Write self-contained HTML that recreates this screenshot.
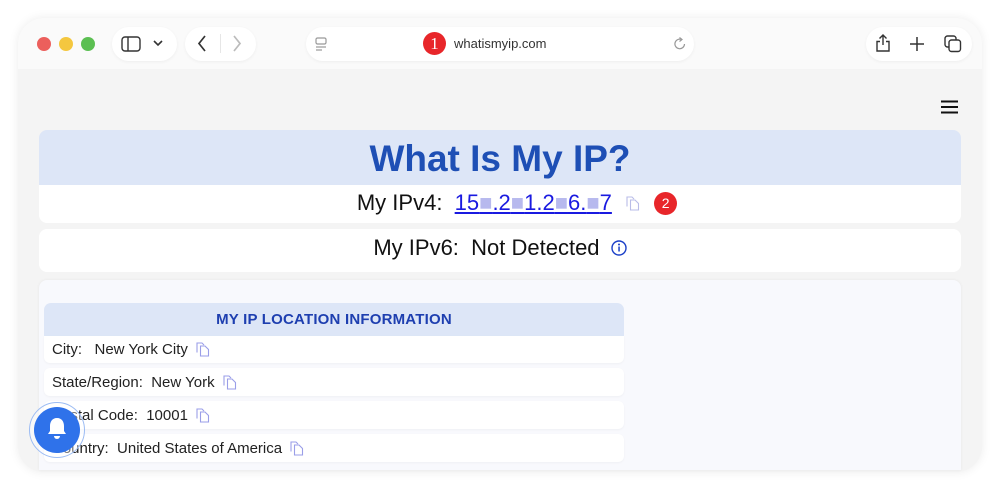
<!DOCTYPE html>
<html><head><meta charset="utf-8"><style>
*{box-sizing:border-box;margin:0;padding:0}
body{width:1000px;height:488px;background:#fff;font-family:"Liberation Sans",Arial,sans-serif;position:relative;overflow:hidden}
.abs{position:absolute}
.frame{left:18px;top:18px;width:964px;height:454px;border-radius:26px;background:#f4f4f4;box-shadow:0 0 10px rgba(0,0,0,.08);overflow:hidden}
.toolbar{left:0;top:0;width:964px;height:51px;background:#fafafa}
.pill{background:#fff;border-radius:18px;height:34px;top:9px;box-shadow:0 1px 3px rgba(0,0,0,.05)}
.dot{width:14px;height:14px;border-radius:50%;top:37px}
.box{background:#fff;border-radius:8px;left:39px;width:922px}
.row{left:44px;width:580px;background:#fff;border-radius:6px;font-size:15px;color:#222;padding-left:8px;display:flex;align-items:center;box-shadow:0 1px 2px rgba(0,0,0,.04)}
.cp{display:inline-block;margin-left:8px}
</style></head><body>
<div class="abs frame">
 <div class="abs toolbar"></div>
</div>
<div class="abs dot" style="left:37px;background:#ec5f5c"></div>
<div class="abs dot" style="left:59px;background:#f4c73f"></div>
<div class="abs dot" style="left:81px;background:#5bbf52"></div>
<div class="abs pill" style="left:112px;width:65px;top:27px"></div>
<svg class="abs" style="left:121px;top:36px" width="20" height="16"><rect x="1" y="1" width="18" height="14" rx="3" fill="none" stroke="#333" stroke-width="1.4"/><line x1="7" y1="1" x2="7" y2="15" stroke="#333" stroke-width="1.4"/></svg>
<svg class="abs" style="left:153px;top:40px" width="10" height="7"><path d="M1 1 L5 5 L9 1" fill="none" stroke="#333" stroke-width="1.6"/></svg>
<div class="abs pill" style="left:185px;width:71px;top:27px"></div>
<svg class="abs" style="left:197px;top:35px" width="10" height="17"><path d="M8 1 L2 8.5 L8 16" fill="none" stroke="#333" stroke-width="1.7"/></svg>
<div class="abs" style="left:220px;top:34px;width:1px;height:19px;background:#e6e6e6"></div>
<svg class="abs" style="left:232px;top:35px" width="10" height="17"><path d="M2 1 L8 8.5 L2 16" fill="none" stroke="#bbb" stroke-width="1.7"/></svg>
<div class="abs pill" style="left:306px;width:388px;top:27px"></div>
<svg class="abs" style="left:314px;top:37px" width="14" height="14"><rect x="2" y="1" width="10" height="6" rx="1.5" fill="none" stroke="#999" stroke-width="1.2"/><line x1="2" y1="10" x2="12" y2="10" stroke="#999" stroke-width="1.2"/><line x1="2" y1="13" x2="8" y2="13" stroke="#999" stroke-width="1.2"/></svg>
<div class="abs" style="left:423px;top:32px;width:23px;height:23px;border-radius:50%;background:#e8262a;color:#fff;font-family:'Liberation Serif',serif;font-size:17px;text-align:center;line-height:23px">1</div>
<div class="abs" style="left:454px;top:36px;font-size:13px;color:#333">whatismyip.com</div>
<svg class="abs" style="left:673px;top:37px" width="14" height="14"><path d="M11.5 7 A4.8 4.8 0 1 1 8 2.3" fill="none" stroke="#999" stroke-width="1.2"/><path d="M6.5 0.5 L9 2.5 L6.5 4.5" fill="none" stroke="#999" stroke-width="1.2"/></svg>
<div class="abs pill" style="left:866px;width:106px;top:27px"></div>
<svg class="abs" style="left:874px;top:33px" width="18" height="20"><path d="M9 2 V12 M5.5 5.5 L9 2 L12.5 5.5 M6 8.5 H3 V18 H15 V8.5 H12" fill="none" stroke="#333" stroke-width="1.4"/></svg>
<svg class="abs" style="left:909px;top:36px" width="16" height="16"><path d="M8 1 V15 M1 8 H15" stroke="#333" stroke-width="1.5"/></svg>
<svg class="abs" style="left:944px;top:35px" width="18" height="18"><rect x="1" y="1" width="11" height="11" rx="2.5" fill="none" stroke="#333" stroke-width="1.4"/><rect x="5" y="5" width="11.5" height="11.5" rx="2.5" fill="#fff" stroke="#333" stroke-width="1.4"/></svg>

<svg class="abs" style="left:941px;top:100px" width="17" height="14"><path d="M0 1.5 H17 M0 7 H17 M0 12.5 H17" stroke="#111" stroke-width="2"/></svg>

<div class="abs box" style="top:130px;height:55px;background:#dde6f7;border-radius:8px 8px 0 0;text-align:center;font-size:37px;font-weight:bold;color:#1e4fb5;line-height:57px">What Is My IP?</div>
<div class="abs box" style="top:185px;height:38px;border-radius:0 0 8px 8px;text-align:center;font-size:22px;color:#111;line-height:36px;padding-left:34px">My IPv4:&nbsp; <span style="color:#1a1ae0;text-decoration:underline">15<span style="color:#b7b9ee">■</span>.2<span style="color:#b7b9ee">■</span>1.2<span style="color:#b7b9ee">■</span>6.<span style="color:#b7b9ee">■</span>7</span>
<svg style="vertical-align:-1px;margin-left:8px" width="14" height="15"><path d="M4.5 4 H9 L12.5 7.5 V14 H4.5 Z M1 10.5 V1 H6 L8 3" fill="none" stroke="#b9bce8" stroke-width="1.1"/></svg>
<span style="display:inline-block;width:23px;height:23px;border-radius:50%;background:#e8262a;color:#fff;font-size:14px;line-height:23px;vertical-align:2px;margin-left:8px">2</span></div>
<div class="abs box" style="top:229px;height:43px;text-align:center;font-size:22px;color:#111;line-height:37px">My IPv6:&nbsp; Not Detected <svg style="vertical-align:-1px;margin-left:5px" width="16" height="16"><circle cx="8" cy="8" r="7" fill="none" stroke="#1a3fc8" stroke-width="1.4"/><rect x="7.3" y="6.5" width="1.5" height="5" fill="#1a3fc8"/><circle cx="8" cy="4.5" r="1" fill="#1a3fc8"/></svg></div>

<div class="abs" style="left:39px;top:280px;width:922px;height:190px;background:#f8f9fd;border-radius:8px 8px 0 0;box-shadow:0 0 3px rgba(0,0,0,.06)"></div>
<div class="abs" style="left:44px;top:303px;width:580px;height:33px;background:#dde6f7;border-radius:7px 7px 0 0;text-align:center;font-size:15px;font-weight:bold;color:#1e3fb0;line-height:33px;letter-spacing:.2px">MY IP LOCATION INFORMATION</div>
<div class="abs row" style="top:336px;height:27px;border-radius:0 0 6px 6px">City:&nbsp;&nbsp; New York City<svg class="cp" width="14" height="15"><path d="M4.5 4 H9 L12.5 7.5 V14 H4.5 Z M1 10.5 V1 H6 L8 3" fill="none" stroke="#9a9ee8" stroke-width="1.1"/></svg></div>
<div class="abs row" style="top:368px;height:28px">State/Region:&nbsp; New York<svg class="cp" width="14" height="15"><path d="M4.5 4 H9 L12.5 7.5 V14 H4.5 Z M1 10.5 V1 H6 L8 3" fill="none" stroke="#9a9ee8" stroke-width="1.1"/></svg></div>
<div class="abs row" style="top:401px;height:28px">Postal Code:&nbsp; 10001<svg class="cp" width="14" height="15"><path d="M4.5 4 H9 L12.5 7.5 V14 H4.5 Z M1 10.5 V1 H6 L8 3" fill="none" stroke="#9a9ee8" stroke-width="1.1"/></svg></div>
<div class="abs row" style="top:434px;height:28px">Country:&nbsp; United States of America<svg class="cp" width="14" height="15"><path d="M4.5 4 H9 L12.5 7.5 V14 H4.5 Z M1 10.5 V1 H6 L8 3" fill="none" stroke="#9a9ee8" stroke-width="1.1"/></svg></div>

<div class="abs" style="left:29px;top:402px;width:56px;height:56px;border-radius:50%;border:1.5px solid #9cbcf3;background:rgba(255,255,255,.4)"></div>
<div class="abs" style="left:34px;top:407px;width:46px;height:46px;border-radius:50%;background:#2f72ea"></div>
<svg class="abs" style="left:45px;top:416px" width="24" height="26"><path d="M12 2 C7 2 5 6 5 10 V15 L3 18 H21 L19 15 V10 C19 6 17 2 12 2 Z" fill="#fff"/><path d="M9 20 A3 3 0 0 0 15 20 Z" fill="#fff"/></svg>
</body></html>
